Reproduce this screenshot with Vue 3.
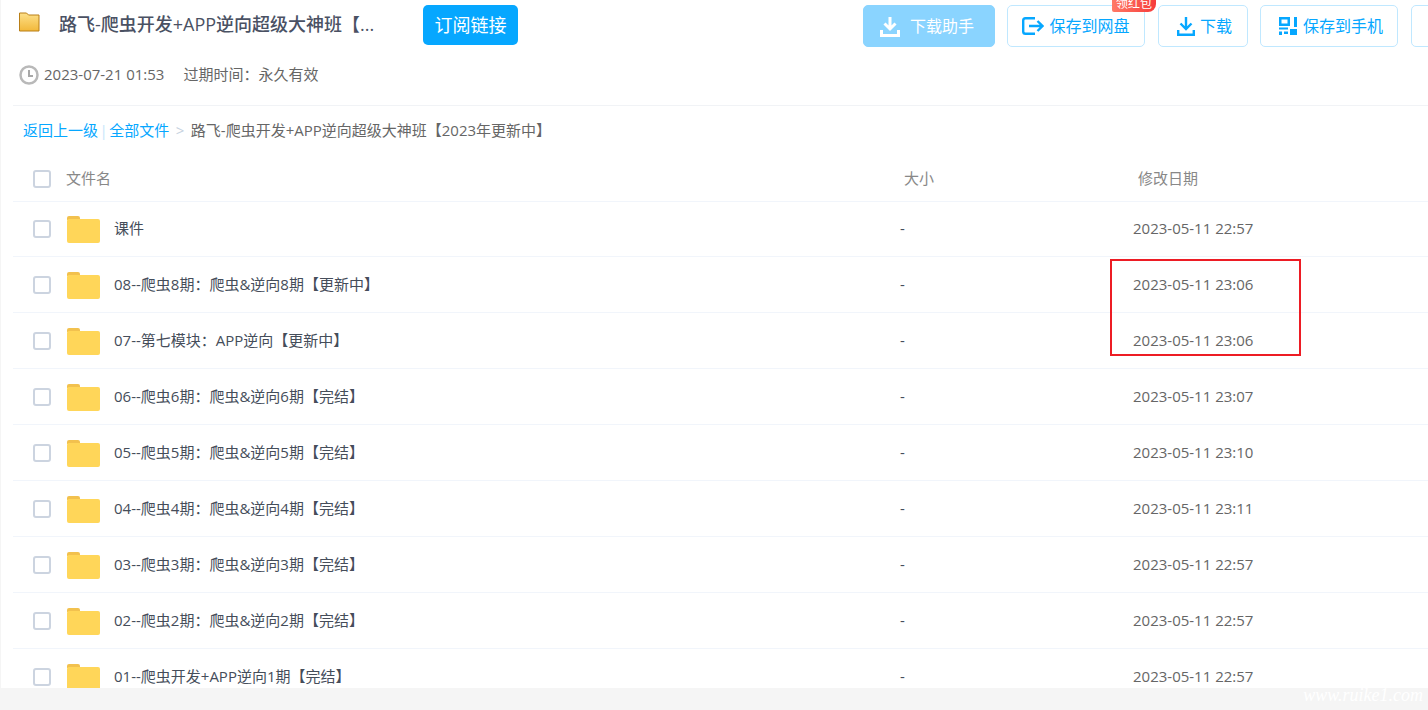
<script setup>
const rows = [
  ['课件', '2023-05-11 22:57'],
  ['08--爬虫8期：爬虫&逆向8期【更新中】', '2023-05-11 23:06'],
  ['07--第七模块：APP逆向【更新中】', '2023-05-11 23:06'],
  ['06--爬虫6期：爬虫&逆向6期【完结】', '2023-05-11 23:07'],
  ['05--爬虫5期：爬虫&逆向5期【完结】', '2023-05-11 23:10'],
  ['04--爬虫4期：爬虫&逆向4期【完结】', '2023-05-11 23:11'],
  ['03--爬虫3期：爬虫&逆向3期【完结】', '2023-05-11 22:57'],
  ['02--爬虫2期：爬虫&逆向2期【完结】', '2023-05-11 22:57'],
  ['01--爬虫开发+APP逆向1期【完结】', '2023-05-11 22:57']
]
</script>

<template>
  <div class="page">
    <div class="main">
      <header class="top">
        <svg class="title-icon" width="21" height="20" viewBox="0 0 21 20">
          <defs>
            <linearGradient id="tf" x1="0" y1="0" x2="0" y2="1">
              <stop offset="0" stop-color="#fde08a" />
              <stop offset="1" stop-color="#f2b83a" />
            </linearGradient>
          </defs>
          <path d="M0.5 1h7l2 2h10.500v16H0.500z" fill="url(#tf)" stroke="#b97f17" />
        </svg>
        <h1 class="title">路飞-爬虫开发+APP逆向超级大神班【...</h1>
        <button class="subscribe">订阅链接</button>
        <div class="actions">
          <button class="btn primary">
            <svg width="20" height="21" viewBox="0 0 20 21"><path d="M10 1v12M4.500 7.500l5.500 5.500 5.500-5.500M1.500 14v5.500h17V14" fill="none" stroke="#fff" stroke-width="3" /></svg>
            <span>下载助手</span>
          </button>
          <button class="btn save">
            <span class="badge">领红包</span>
            <svg width="22" height="18" viewBox="0 0 22 18"><path d="M13 1.200H3.500a2.300 2.300 0 0 0-2.300 2.300v11a2.300 2.300 0 0 0 2.300 2.300H13M7 9h13M15.500 4l5 5-5 5" fill="none" stroke="#06a7ff" stroke-width="2.400" /></svg>
            <span>保存到网盘</span>
          </button>
          <button class="btn dl">
            <svg width="18" height="20" viewBox="0 0 18 20"><path d="M9 1v12M3.500 7.500L9 13l5.500-5.500M1.200 14v4.800h15.600V14" fill="none" stroke="#06a7ff" stroke-width="2.400" /></svg>
            <span>下载</span>
          </button>
          <button class="btn phone">
            <svg width="18" height="18" viewBox="0 0 18 18" fill="#06a7ff"><path fill-rule="evenodd" d="M0 0h11v9H0zM2.500 2.500v4h6v-4zM15 0h3v10h-3zM0 10.500h9v2H0zM0 14.500h3V18H0zM5 14.500h4V17H5zM11 12h7v6h-7z" /></svg>
            <span>保存到手机</span>
          </button>
          <button class="btn more"></button>
        </div>
      </header>

      <div class="meta">
        <svg width="20" height="20" viewBox="0 0 20 20"><circle cx="10" cy="10" r="8.500" fill="none" stroke="#b9b9b9" stroke-width="2.500" /><path d="M10 5v6h4" fill="none" stroke="#a8a8a8" stroke-width="2" /></svg>
        <span class="date">2023-07-21 01:53</span>
        <span class="expire">过期时间：永久有效</span>
      </div>

      <nav class="crumbs">
        <a>返回上一级</a><i class="bar">|</i><a>全部文件</a><i class="gt">&gt;</i><span>路飞-爬虫开发+APP逆向超级大神班【2023年更新中】</span>
      </nav>

      <div class="table">
        <div class="row head">
          <span class="check"></span>
          <span class="name head-name">文件名</span>
          <span class="size head-size">大小</span>
          <span class="time head-time">修改日期</span>
        </div>
        <div v-for="r in rows" :key="r[0]" class="row item">
          <span class="check"></span>
          <svg class="folder" width="34" height="28" viewBox="0 0 34 28">
            <path d="M1 3a2 2 0 0 1 2-2h9a2 2 0 0 1 2 2v2H1z" fill="#f2c14e" />
            <path d="M1 6a2 2 0 0 1 2-2h29a2 2 0 0 1 2 2v20a2 2 0 0 1-2 2H3a2 2 0 0 1-2-2z" fill="#ffd659" />
          </svg>
          <span class="name">{{ r[0] }}</span>
          <span class="size">-</span>
          <span class="time">{{ r[1] }}</span>
        </div>
      </div>

      <div class="mark"></div>
    </div>
    <footer class="foot">www.ruike1.com</footer>
  </div>
</template>

<style>
html, body { margin: 0; overflow: hidden; }
</style>

<style scoped>
.page {
  height: 710px;
  width: 1428px;
  overflow: hidden;
  display: flex;
  flex-direction: column;
  background: #f5f5f5;
  font-family: "Open Sans", "Noto Sans CJK SC", sans-serif;
  font-size: 15px;
}
.main {
  position: relative;
  height: 688px;
  flex: none;
  overflow: hidden;
  margin-left: 1px;
  padding-left: 12px;
  background: #fff;
}
.top {
  height: 50px;
  display: flex;
  align-items: flex-start;
}
.title-icon { margin: 12px 0 0 6px; flex: none; }
.title {
  width: 340px;
  margin: 12px 0 0 19px;
  font-size: 18px;
  line-height: 24px;
  font-weight: 500;
  color: #4a5163;
  white-space: nowrap;
  flex: none;
}
.subscribe {
  width: 95px;
  height: 40px;
  margin: 5px 0 0 24px;
  padding: 0 0 2px;
  flex: none;
  border: 0;
  border-radius: 5px;
  background: #06a7ff;
  color: #fff;
  font: inherit;
  font-size: 18px;
}
.actions {
  display: flex;
  margin-left: 345px;
  padding-top: 5px;
  gap: 12px;
  flex: none;
}
.btn {
  position: relative;
  height: 42px;
  box-sizing: border-box;
  border: 1px solid #c0e8ff;
  border-radius: 5px;
  background: #fff;
  color: #06a7ff;
  font: inherit;
  font-size: 16px;
  padding: 0;
  display: flex;
  align-items: center;
  justify-content: center;
  gap: 5px;
}
.btn > span:last-child { margin-bottom: 2px; }
.primary { width: 132px; padding-right: 4px; background: #8ad4ff; border-color: #8ad4ff; color: #fff; gap: 10px; }
.save { width: 138px; }
.dl { width: 90px; margin-left: 1px; padding-left: 3px; }
.phone { width: 138px; padding-left: 4px; gap: 6px; }
.more { width: 40px; margin-left: 1px; }
.btn .badge {
  position: absolute;
  top: -10px;
  right: -12px;
  width: 44px;
  height: 16px;
  margin: 0;
  border-radius: 0 0 8px 2px;
  background: linear-gradient(90deg, #ff7a66, #f63b3b);
  color: #fff;
  font-size: 12px;
  line-height: 16px;
  text-align: center;
}
.meta {
  height: 56px;
  box-sizing: border-box;
  border-bottom: 1px solid #f1f3f6;
  display: flex;
  align-items: flex-start;
  padding: 15px 0 0 6px;
  color: #666;
  line-height: 18px;
}
.date { margin-left: 5px; }
.expire { margin-left: 19px; }
.crumbs {
  height: 50px;
  box-sizing: border-box;
  padding: 14px 0 0 10px;
  line-height: 20px;
  color: #666;
}
.crumbs a { color: #06a7ff; }
.bar { font-style: normal; color: #c6e6fa; margin: 0 1.500px; }
.gt { font-style: normal; color: #c6d2e0; margin: 0 6.500px; }
.row {
  display: flex;
  align-items: center;
  box-sizing: border-box;
  border-bottom: 1px solid #f1f5fb;
  color: #454d5a;
}
.head { height: 46px; color: #888; }
.item { height: 56px; }
.head + .item { height: 55px; }
.check {
  width: 18px;
  height: 18px;
  box-sizing: border-box;
  flex: none;
  margin-left: 20px;
  border: 2px solid #ccd4e0;
  border-radius: 3px;
  background: #fff;
}
.folder { flex: none; margin-left: 15px; }
.name { margin: 0 0 2px 14px; width: 786px; flex: none; white-space: nowrap; }
.head + .item .name { margin-bottom: 4px; }
.head-name { margin: 0 0 2px 15px; width: 838px; }
.size { width: 233px; flex: none; margin-bottom: 2px; }
.head-size { width: 234px; }
.time { flex: none; color: #666; margin-bottom: 2px; }
.head-time { color: #888; }
.mark {
  position: absolute;
  left: 1109px;
  top: 259px;
  width: 191px;
  height: 97px;
  box-sizing: border-box;
  border: 2px solid #ed1c24;
}
.foot {
  flex: 1;
  padding-right: 5px;
  text-align: right;
  color: #fff;
  font-family: "Liberation Serif", serif;
  font-style: italic;
  font-size: 18px;
  line-height: 15px;
}
</style>
